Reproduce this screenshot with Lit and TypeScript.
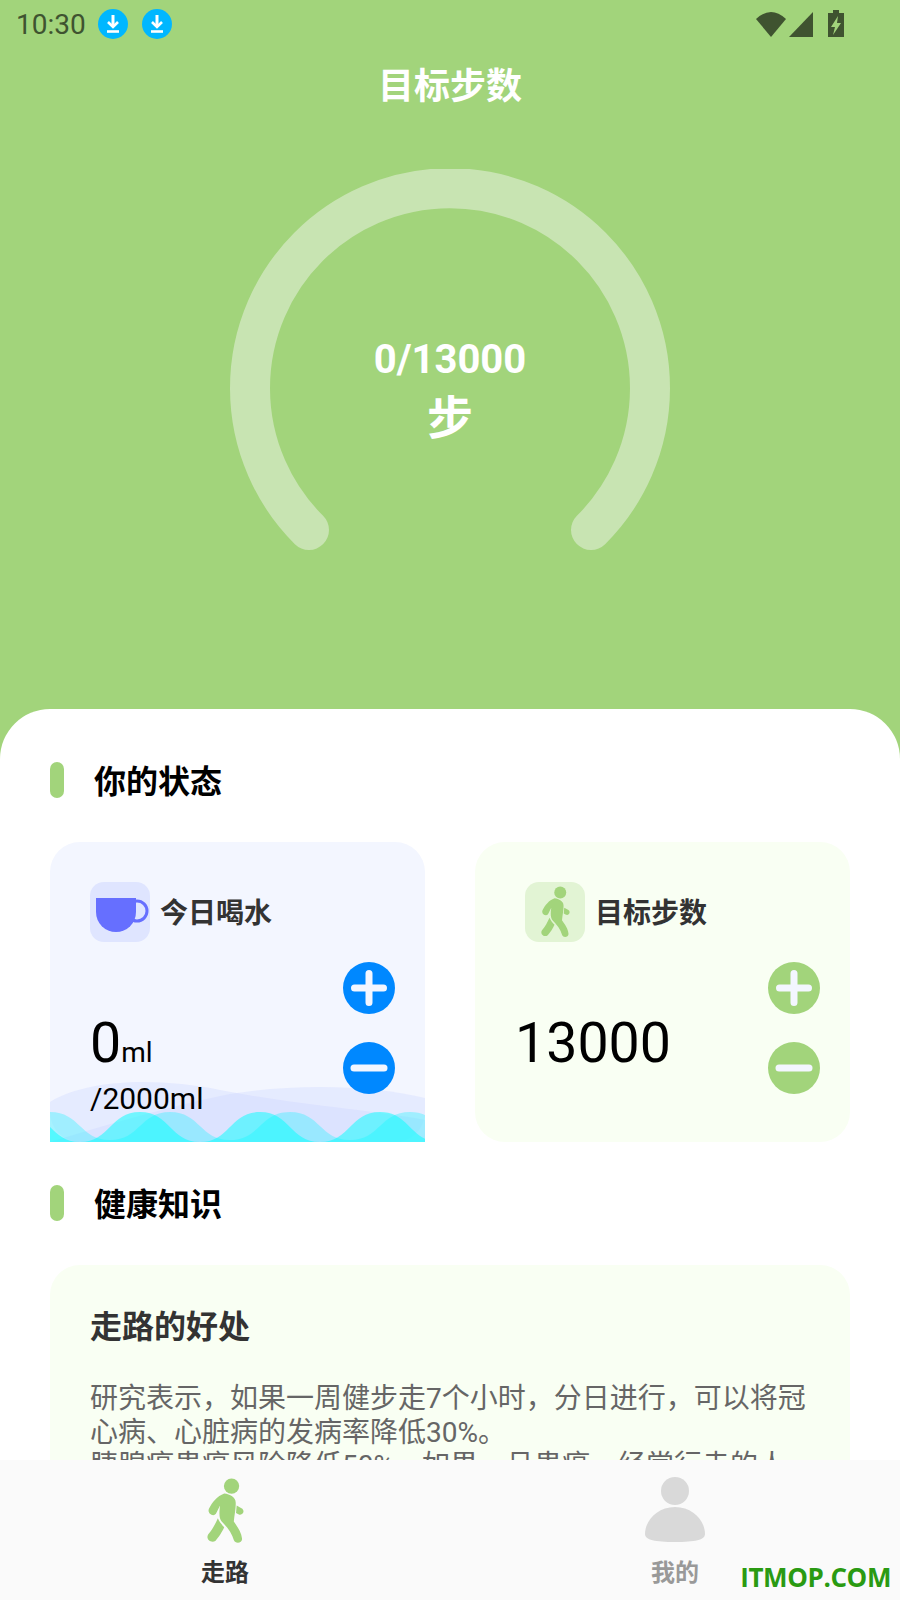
import { LitElement, html, css, svg } from "lit";
import { customElement } from "lit/decorators.js";

// same figure in the card icon and in the tab bar
const walker = (w: number, h: number) => html`
  <svg class="walker" width=${w} height=${h} viewBox="76 36 116 206">
    <circle cx="153" cy="61" r="24" />
    <path d="M130 84C148 86 166 96 166 112C167 130 162 150 160 172C172 190 184 205 186 226C187 240 165 244 160 230C155 210 140 190 122 172C115 163 113 150 117 122L104 148C96 158 76 148 82 132C92 112 108 92 130 84Z" />
    <path d="M110 162C114 172 122 182 130 190C124 204 112 222 103 232C90 242 70 228 80 212C92 198 102 180 110 162Z" />
    <path d="M169 122L184 130C196 136 190 154 176 150L167 145Z" />
  </svg>
`;

// sine-like strip along the bottom of the wave box
function wavePath(start: number, period: number, top: number, bottom: number) {
  let d = `M${start} 60`;
  d += ` L${start} ${bottom}`;
  let x = start;
  let up = true;
  while (x < 375) {
    const next = x + period / 2;
    const y = up ? top : bottom;
    const prev = up ? bottom : top;
    d += ` C${x + period / 4} ${prev} ${x + period / 4} ${y} ${next} ${y}`;
    x = next;
    up = !up;
  }
  return d + ` L${x} 60 Z`;
}

@customElement("round-btn")
export class RoundBtn extends LitElement {
  static properties = { kind: {}, color: {} };
  kind = "plus";
  color = "#0088ff";

  static styles = css`
    :host {
      display: block;
      width: 52px;
      height: 52px;
    }
    svg {
      display: block;
    }
  `;

  render() {
    return html`
      <svg width="52" height="52" viewBox="0 0 52 52">
        <circle cx="26" cy="26" r="26" fill=${this.color} />
        <path
          d=${this.kind === "plus" ? "M26 11.500V40.500M11.500 26H40.500" : "M11 26H41"}
          stroke="#f3f6ff"
          stroke-width="7"
          stroke-linecap="round"
          fill="none"
        />
      </svg>
    `;
  }
}

@customElement("app-root")
export class AppRoot extends LitElement {
  static styles = css`
    :host {
      display: block;
      width: 900px;
      height: 1600px;
      font-family: Roboto, "Noto Sans CJK SC", sans-serif;
    }
    .page {
      position: relative;
      width: 900px;
      height: 1600px;
      display: flex;
      flex-direction: column;
      background: #a2d47b;
      overflow: hidden;
    }

    .status {
      height: 48px;
      flex: none;
      display: flex;
      align-items: center;
      padding: 0 56px 0 16px;
      color: #3f5330;
      font-size: 28px;
    }
    .status .time {
      margin-right: 12px;
    }
    .status .dl {
      margin-right: 14px;
    }
    .status .sys {
      margin-left: auto;
    }
    .status svg {
      display: block;
    }

    .title {
      flex: none;
      height: 72px;
      margin-top: 3px;
      text-align: center;
      color: #fff;
      font-size: 36px;
      line-height: 72px;
      font-weight: 700;
    }

    .gauge {
      flex: none;
      position: relative;
      width: 440px;
      height: 400px;
      margin: 46px auto 0;
    }
    .gauge svg {
      display: block;
    }
    .gauge .center {
      position: absolute;
      left: 0;
      right: 0;
      top: 162px;
      text-align: center;
      color: #fff;
      font-weight: 700;
    }
    .gauge .count {
      font-size: 40px;
      line-height: 58px;
    }
    .gauge .unit {
      margin-top: 2px;
      font-size: 46px;
      line-height: 54px;
    }

    .sheet {
      flex: 1;
      min-height: 0;
      margin-top: 140px;
      padding: 0 50px;
      background: #fff;
      border-radius: 50px 50px 0 0;
      overflow: hidden;
    }

    .section {
      display: flex;
      align-items: center;
      gap: 30px;
      height: 36px;
      color: #000;
      font-size: 32px;
      font-weight: 700;
    }
    .section::before {
      content: "";
      width: 14px;
      height: 36px;
      border-radius: 7px;
      background: #a2d47b;
    }
    .section span {
      margin-top: -3px;
    }
    .section.first {
      margin-top: 53px;
    }
    .section.second {
      margin-top: 43px;
    }

    .cards {
      display: grid;
      grid-template-columns: 375px 375px;
      justify-content: space-between;
      margin-top: 44px;
    }
    .card {
      position: relative;
      height: 300px;
      padding: 40px 30px 0 40px;
      box-sizing: border-box;
      border-radius: 30px;
    }
    .card.water {
      background: #f3f6ff;
    }
    .card.steps {
      background: #f9fff3;
    }
    .wave {
      position: absolute;
      left: 0;
      bottom: 0;
      display: block;
    }
    .head {
      position: relative;
      display: flex;
      align-items: center;
      gap: 10px;
      color: #333;
      font-size: 28px;
      font-weight: 700;
    }
    .head span {
      margin-top: -3px;
    }
    .steps .head {
      margin-left: 10px;
    }
    .tile {
      width: 60px;
      height: 60px;
      border-radius: 14px;
      display: flex;
      align-items: center;
      justify-content: center;
    }
    .tile svg {
      display: block;
    }
    .water .tile {
      background: #dfe5ff;
    }
    .steps .tile {
      background: #e2f4d4;
    }
    .walker {
      display: block;
      fill: #a2d47b;
    }
    .row {
      position: relative;
      display: flex;
      justify-content: space-between;
      margin-top: 20px;
    }
    .btns {
      display: flex;
      flex-direction: column;
      gap: 28px;
    }
    .value {
      margin-top: 49px;
      color: #000;
      font-size: 55.5px;
      line-height: 66px;
    }
    .value small {
      font-size: 28px;
    }
    .goal {
      color: #000;
      font-size: 30px;
      line-height: 36px;
      margin-top: -5px;
    }

    .article {
      margin-top: 44px;
      padding: 40px 40px 0;
      height: 400px;
      box-sizing: border-box;
      background: #f9fff3;
      border-radius: 30px;
    }
    .article h3 {
      margin: 0;
      color: #333;
      font-size: 32px;
      line-height: 44px;
      font-weight: 700;
    }
    .article p {
      margin: 33px 0 0;
      color: #666;
      font-size: 28px;
      line-height: 33.5px;
      width: 720px;
    }

    .tabs {
      flex: none;
      height: 140px;
      display: grid;
      grid-template-columns: 1fr 1fr;
      background: #fafafa;
    }
    .tab {
      display: flex;
      flex-direction: column;
      align-items: center;
      padding-top: 17px;
      font-size: 24px;
      font-weight: 700;
      color: #999;
    }
    .tab.on {
      color: #333;
    }
    .tab svg {
      display: block;
      height: 68px;
    }
    .tab span {
      margin-top: 11px;
      line-height: 34px;
    }

    .mark {
      position: absolute;
      right: 9px;
      bottom: 7px;
      color: #2a9a12;
      font-family: "Open Sans", sans-serif;
      font-size: 26px;
      font-weight: 700;
      letter-spacing: -0.4px;
      line-height: 32px;
    }
  `;

  render() {
    return html`
      <div class="page">
        ${this.renderStatus()}
        <div class="title">目标步数</div>
        <div class="gauge">
          <svg width="440" height="400" viewBox="0 0 440 400">
            <path
              d="M79 361A200 200 0 1 1 361 361"
              fill="none"
              stroke="#c8e4b2"
              stroke-width="40"
              stroke-linecap="round"
            />
          </svg>
          <div class="center">
            <div class="count">0/13000</div>
            <div class="unit">步</div>
          </div>
        </div>

        <div class="sheet">
          <div class="section first"><span>你的状态</span></div>
          <div class="cards">
            <div class="card water">
              ${this.renderWave()}
              <div class="head">
                <div class="tile">
                  <svg width="60" height="60" viewBox="0 0 60 60">
                    <circle cx="47" cy="29" r="10" fill="none" stroke="#666fff" stroke-width="3" />
                    <path d="M6 16H46V30A20 20 0 0 1 6 30Z" fill="#666fff" />
                  </svg>
                </div>
                <span>今日喝水</span>
              </div>
              <div class="row">
                <div>
                  <div class="value">0<small>ml</small></div>
                  <div class="goal">/2000ml</div>
                </div>
                <div class="btns">
                  <round-btn kind="plus"></round-btn>
                  <round-btn kind="minus"></round-btn>
                </div>
              </div>
            </div>
            <div class="card steps">
              <div class="head">
                <div class="tile">${walker(29, 52)}</div>
                <span>目标步数</span>
              </div>
              <div class="row">
                <div class="value">13000</div>
                <div class="btns">
                  <round-btn kind="plus" color="#a2d47b"></round-btn>
                  <round-btn kind="minus" color="#a2d47b"></round-btn>
                </div>
              </div>
            </div>
          </div>

          <div class="section second"><span>健康知识</span></div>
          <div class="article">
            <h3>走路的好处</h3>
            <p>
              研究表示，如果一周健步走7个小时，分日进行，可以将冠心病、心脏病的发病率降低30%。<br />胰腺癌患癌风险降低50%。如果一旦患癌，经常行走的人
            </p>
          </div>
        </div>

        <div class="tabs">
          <div class="tab on">
            ${walker(37, 68)}
            <span>走路</span>
          </div>
          <div class="tab">
            <svg width="60" height="68" viewBox="0 0 60 68">
              <ellipse cx="30" cy="14" rx="14" ry="14" fill="#d9d9d9" />
              <path d="M30 30C48 30 60 44 60 57C60 63 50 65 30 65C10 65 0 63 0 57C0 44 12 30 30 30Z" fill="#d9d9d9" />
            </svg>
            <span>我的</span>
          </div>
        </div>

        <div class="mark">ITMOP.COM</div>
      </div>
    `;
  }

  renderStatus() {
    const dl = html`
      <svg class="dl" width="30" height="30" viewBox="0 0 30 30">
        <circle cx="15" cy="15" r="15" fill="#00b7ff" />
        <path d="M15 6V17" stroke="#fff" stroke-width="3" />
        <path d="M10 13L15 18L20 13" fill="none" stroke="#fff" stroke-width="2.600" />
        <path d="M9 22.500H21" stroke="#fff" stroke-width="2.600" />
      </svg>
    `;
    return html`
      <div class="status">
        <span class="time">10:30</span>
        ${dl}${dl}
        <svg class="sys" width="88" height="30" viewBox="0 0 88 30">
          <path d="M0 10Q15 -4 30 10L15 28Z" fill="#3f5330" />
          <path d="M57 3V28H33Z" fill="#3f5330" />
          <path d="M72 4H77V1H83V4H88V28H72Z" fill="#3f5330" />
          <path d="M82 7L75 18H79L77 26L85 14H81Z" fill="#a2d47b" />
        </svg>
      </div>
    `;
  }

  renderWave() {
    return html`
      <svg class="wave" width="375" height="60" viewBox="0 0 375 60">
        ${svg`
          <path d="M0 20C40 -4 110 -4 170 8C240 22 320 28 375 38V60H0Z" fill="#c8d2ff" fill-opacity="0.3" />
          <path d="M0 60C60 42 120 24 180 12C240 2 320 2 375 16V60H0Z" fill="#c8d2ff" fill-opacity="0.3" />
          <path d=${wavePath(-60, 120, 30, 58)} fill="#00f5ff" fill-opacity="0.3" />
          <path d=${wavePath(-90, 120, 30, 60)} fill="#00ffff" fill-opacity="0.5" />
        `}
      </svg>
    `;
  }
}
